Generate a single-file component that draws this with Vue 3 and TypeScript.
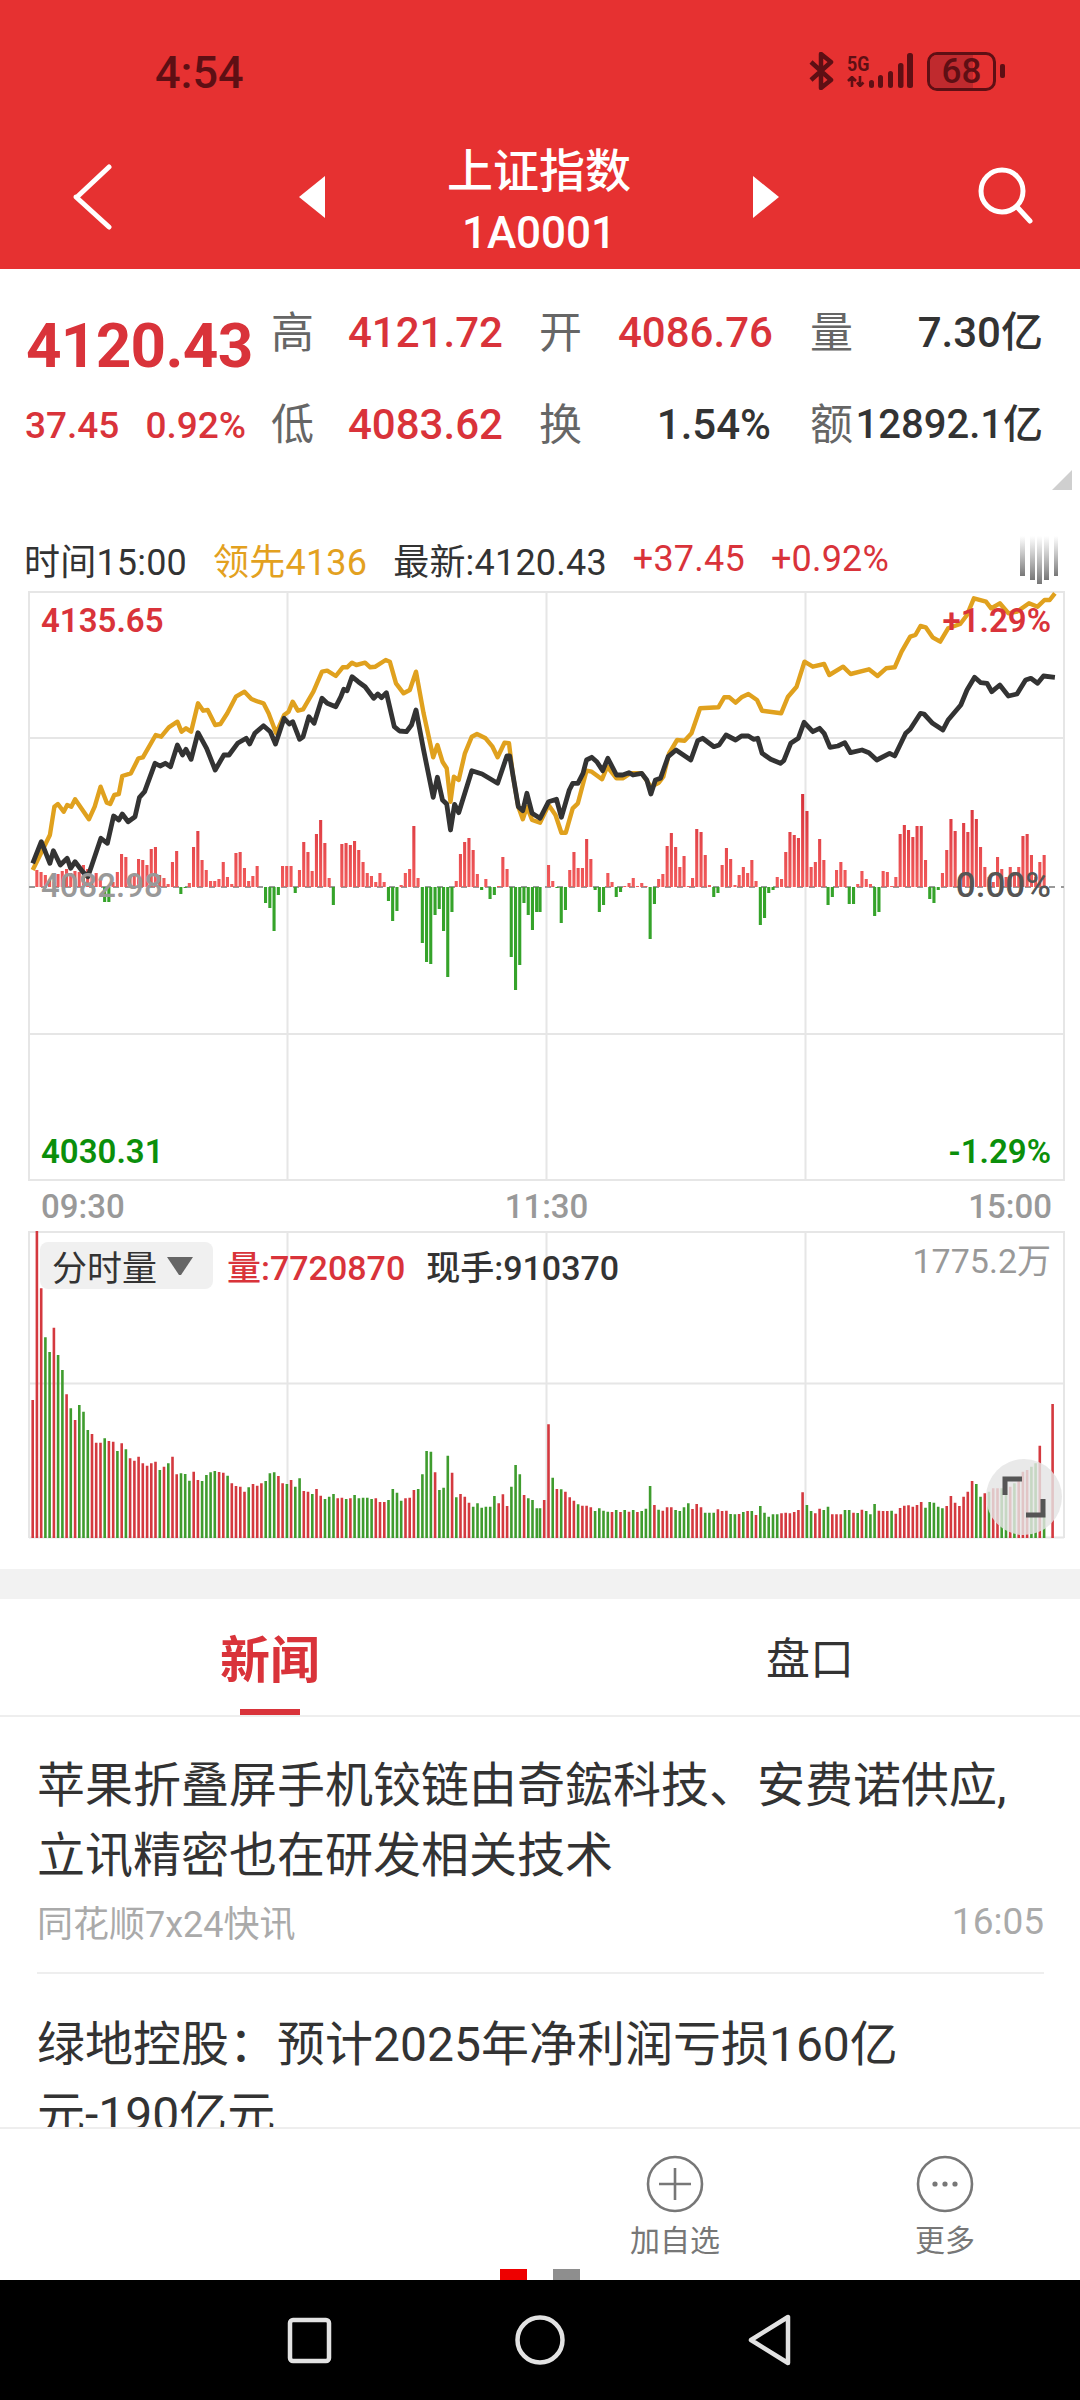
<script setup lang="ts">
const SX = 1568 / 540

const blackL = [95,1030,120,965,145,1030,155,992,175,1035,195,1015,205,1045,218,1025,240,1055,255,1070,265,1040,293,955,312,970,330,888,345,900,355,882,372,905,392,890,405,832,420,815,450,730,465,738,480,730,495,740,515,675,530,705,540,688,555,718,575,638,600,685,625,750,650,705,665,705,690,670,715,655,725,672,740,640,765,617,785,635,800,672,825,595,840,612,850,605,870,658,880,650,897,590,912,610,935,535,950,550,975,560,990,530,998,508,1008,512,1022,470,1040,485,1060,500,1085,535,1097,522,1108,533,1122,518,1145,620,1160,633,1180,635,1195,615,1208,570,1230,690,1258,832,1270,772,1285,840,1297,852,1308,930,1320,853,1332,878,1370,752,1400,762,1445,790,1472,708,1480,708,1505,860,1518,872,1530,820,1545,880,1568,895]
const blackR = [0,895,25,845,48,838,62,892,85,810,95,790,110,790,125,760,135,720,150,712,165,725,182,752,197,715,222,765,240,765,258,758,270,765,295,760,310,780,322,822,335,780,350,775,372,710,395,690,438,720,458,662,472,655,505,680,520,675,540,645,568,660,585,648,605,648,620,658,632,655,645,700,670,718,698,730,708,722,728,670,750,655,767,607,792,635,812,625,825,640,842,682,865,678,885,668,902,698,935,690,955,698,978,720,1015,700,1030,708,1062,640,1075,628,1105,580,1115,582,1140,610,1170,630,1185,600,1222,555,1240,510,1262,472,1280,488,1298,490,1312,515,1335,495,1360,528,1385,522,1410,480,1425,475,1445,490,1462,468,1495,472]
const goldL = [95,1050,145,945,158,860,168,852,185,875,195,855,207,860,218,838,238,868,258,898,275,860,292,800,310,848,320,852,332,825,345,822,355,768,380,760,402,715,415,712,452,645,468,650,490,622,515,605,527,635,540,625,555,635,575,550,590,572,603,570,625,615,640,612,660,580,685,530,710,515,730,537,750,545,765,550,780,580,802,640,825,585,838,575,850,545,865,572,880,568,910,515,935,455,950,452,975,468,995,442,1008,442,1022,428,1035,435,1060,428,1075,442,1090,440,1120,420,1132,425,1150,490,1172,520,1190,510,1208,455,1230,580,1258,712,1270,675,1285,725,1297,745,1308,845,1318,770,1332,780,1350,700,1370,650,1385,642,1410,655,1430,680,1445,712,1465,668,1478,670,1490,770,1505,860,1518,898,1530,860,1545,900,1568,908]
const goldR = [0,905,25,855,45,885,62,938,75,938,95,865,110,850,135,752,150,755,180,778,195,740,222,775,240,775,262,760,295,760,310,782,322,800,345,788,358,770,375,700,398,660,420,662,440,640,465,565,518,562,535,532,550,532,568,548,585,532,605,522,630,540,645,572,700,580,720,530,745,500,768,425,792,440,825,432,840,465,880,440,902,462,955,448,980,468,1005,445,1030,442,1050,395,1075,350,1090,345,1105,318,1120,322,1140,352,1162,365,1185,325,1220,312,1240,285,1260,235,1295,245,1310,265,1335,250,1360,280,1385,275,1420,250,1445,260,1465,240,1480,240,1495,220]

function toPoints(left: number[], right: number[]): string {
  const out: string[] = []
  for (let i = 0; i < left.length; i += 2) out.push(`${(left[i] / SX).toFixed(1)},${(520 + left[i + 1] / 3).toFixed(1)}`)
  for (let i = 2; i < right.length; i += 2) out.push(`${(540 + right[i] / SX).toFixed(1)},${(520 + right[i + 1] / 3).toFixed(1)}`)
  return out.join(' ')
}
const blackLine = toPoints(blackL, blackR)
const goldLine = toPoints(goldL, goldR)

const diffL = [17,15,12,8,5,13,16,18,14,16,15,22,18,10,14,8,-15,-15,5,15,33,30,10,12,28,27,22,38,40,12,9,3,25,36,-7,-1,4,40,56,27,17,6,6,8,25,10,3,34,35,19,6,11,21,0,-16,-21,-44,-8,21,21,21,-6,17,45,35,16,53,67,44,9,-18,0,43,44,42,46,37,25,14,11,5,14,5,-14,-34,-24,2,14,18,61,9,-56,-75,-77,-28,-22,-44,-90,-25,6,33,45,49,37,13,-3,8,-12,-8,1,30,18,-70,-103,-78,-16,-28,-43,-25]
const diffR = [-25,0,22,6,-1,-36,-23,17,35,19,19,48,28,-3,-25,-18,14,5,-10,-5,1,4,9,1,4,1,-52,-17,8,13,41,54,40,20,31,1,9,58,55,32,2,-10,-6,22,39,28,2,12,20,14,27,6,-38,-31,-6,-3,10,8,35,55,52,49,93,76,20,25,48,27,-18,-10,17,25,17,-17,-17,3,16,8,3,-29,-25,16,15,1,10,53,62,57,50,61,61,27,-12,-16,-3,14,37,68,56,2,64,55,77,68,40,20,10,5,30,18,10,20,15,20,51,53,32,10,25,32]

const volL = [660,150,325,-472,-516,443,-525,-570,643,-685,720,-675,-695,-750,762,788,788,-775,783,785,-813,790,-808,835,842,830,850,857,850,845,-870,860,-850,830,883,-880,-882,-902,875,900,-903,-885,-877,-873,876,878,-887,910,918,920,935,-922,912,917,910,-903,-880,-877,888,910,-912,900,-920,-895,933,935,-942,927,947,-957,-950,-942,955,953,-957,955,-945,-955,-953,-953,-957,955,966,966,-960,-927,-938,-962,955,953,930,-927,-883,-813,-815,877,-930,-923,-827,878,-952,942,950,968,-980,-970,-983,-980,-980,-948,970,943,978,-920,-855,-883,945,-955,-960,-985]
const volR = [-985,960,733,-893,927,-928,935,952,962,-973,977,977,982,-993,-985,-992,-995,996,-990,996,-990,995,-990,996,-993,-986,-918,975,-989,992,982,982,-990,-993,-982,-970,987,972,982,-998,-998,-998,988,993,992,-1002,-1003,1002,-996,993,-993,1005,-978,-998,-1010,-1003,-1003,1000,998,1000,996,990,937,-975,-993,1000,986,-990,-980,1003,1003,1003,-990,-990,998,-999,989,-993,-1003,-972,992,993,993,-992,1001,984,977,976,980,975,966,-983,-966,-968,-980,-985,978,948,968,978,950,935,903,-912,-950,940,-935,925,925,-925,-930,920,-910,890,875,870,-860,-850,797,-1000,0,672]

function diffPaths() {
  let red = ''
  let green = ''
  const add = (x: number, h: number) => {
    if (h === 0) return
    const seg = `M${x.toFixed(1)} 887h3.1v${(-h).toFixed(1)}h-3.1Z`
    if (h > 0) red += seg
    else green += seg
  }
  diffL.forEach((h, i) => add(36.8 - 1.5 + (i * 12.3) / SX, h))
  diffR.forEach((h, i) => add(540 - 1.5 + (i * 12.3) / SX, h))
  return { red, green }
}
function volPaths() {
  let red = ''
  let green = ''
  const add = (x: number, v: number) => {
    if (v === 0) return
    const top = 1180 + Math.abs(v) / 3
    const seg = `M${x.toFixed(1)} 1538V${top.toFixed(1)}h2.6V1538Z`
    if (v > 0) red += seg
    else green += seg
  }
  volL.forEach((v, i) => add(32.7 - 1.3 + (i * 12.3) / SX, v))
  volR.forEach((v, i) => add(540 - 1.3 + (i * 12.3) / SX, v))
  return { red, green }
}
const diff = diffPaths()
const vol = volPaths()

const signal = [
  { x: 869, y: 82, h: 8, w: 5 },
  { x: 878, y: 77, h: 13, w: 5 },
  { x: 888, y: 73, h: 17, w: 5 },
  { x: 898, y: 65, h: 25, w: 5.5 },
  { x: 907, y: 55, h: 35, w: 6 }
]
</script>

<template>
  <div class="page">
    <header class="header">
      <div class="status">
        <span class="clock">4:54</span>
        <div class="status-icons">
          <svg class="bt" width="26" height="38" viewBox="0 0 26 38" fill="none" stroke="#5e0f14" stroke-width="4.5" stroke-linejoin="round">
            <path d="M2 10 22 28 12 36V2l10 8L2 28" />
          </svg>
          <div class="net">
            <span class="five-g">5G</span>
            <svg width="19" height="11" viewBox="0 0 19 11" fill="none" stroke="#5e0f14" stroke-width="2.6">
              <path d="M5 11V1.5M1 5l4-4 4 4M13 0v9.500M10 6.500l3 3.500 3.500-3.500" />
            </svg>
          </div>
          <svg class="sig" width="48" height="36" viewBox="866 55 48 36">
            <rect v-for="s in signal" :key="s.x" :x="s.x" :y="s.y" :width="s.w" :height="s.h" rx="2.500" fill="#5e0f14" />
          </svg>
          <div class="battery">
            <div class="battery-fill"></div>
            <span class="battery-num">68</span>
          </div>
          <div class="battery-nub"></div>
        </div>
      </div>
      <nav class="nav">
        <svg class="back" width="40" height="66" viewBox="0 0 40 66" fill="none" stroke="#fff" stroke-width="5" stroke-linecap="round" stroke-linejoin="round">
          <path d="M36 3 4 33l-1 0 33 30" />
        </svg>
        <div class="nav-center">
          <svg width="28" height="42" viewBox="0 0 28 42"><path d="M27 0v42L1 21Z" fill="#fff" /></svg>
          <div class="title">
            <div class="title-name">上证指数</div>
            <div class="title-code">1A0001</div>
          </div>
          <svg width="28" height="42" viewBox="0 0 28 42"><path d="M1 0v42l26-21Z" fill="#fff" /></svg>
        </div>
        <svg class="search" width="56" height="60" viewBox="0 0 56 60" fill="none" stroke="#fff" stroke-width="5" stroke-linecap="round">
          <circle cx="24" cy="24" r="21" />
          <path d="M40 41 52 54" />
        </svg>
      </nav>
    </header>

    <section class="quote">
      <div class="price">4120.43</div>
      <div class="lab">高</div>
      <div class="val red">4121.72</div>
      <div class="lab">开</div>
      <div class="val red">4086.76</div>
      <div class="lab">量</div>
      <div class="val dark end">7.30亿</div>

      <div class="change"><span>37.45</span><span>0.92%</span></div>
      <div class="lab">低</div>
      <div class="val red">4083.62</div>
      <div class="lab">换</div>
      <div class="val dark mid">1.54%</div>
      <div class="lab">额</div>
      <div class="val dark end tight">12892.1亿</div>
    </section>
    <div class="corner">
      <svg width="20" height="20" viewBox="0 0 20 20"><path d="M20 0V20H0Z" fill="#cfcfcf" /></svg>
    </div>

    <div class="info">
      <span>时间15:00</span>
      <span class="gold">领先4136</span>
      <span>最新:4120.43</span>
      <span class="red">+37.45</span>
      <span class="red">+0.92%</span>
      <svg class="handle" width="40" height="52" viewBox="0 0 40 52">
        <defs>
          <linearGradient id="hg" x1="0" y1="0" x2="0" y2="1">
            <stop offset="0" stop-color="#888" stop-opacity="0" />
            <stop offset="1" stop-color="#777" />
          </linearGradient>
        </defs>
        <rect x="1" y="2" width="5" height="40" fill="url(#hg)" />
        <rect x="11" y="2" width="5" height="44" fill="url(#hg)" />
        <rect x="18" y="2" width="5" height="48" fill="url(#hg)" />
        <rect x="25" y="2" width="5" height="44" fill="url(#hg)" />
        <rect x="35" y="2" width="4" height="40" fill="url(#hg)" />
      </svg>
    </div>

    <div class="chart chart-main">
      <svg class="plot" width="1080" height="590" viewBox="0 591 1080 590">
        <defs>
          <linearGradient id="redbar" gradientUnits="userSpaceOnUse" x1="0" y1="800" x2="0" y2="887">
            <stop offset="0" stop-color="#d8343c" />
            <stop offset="1" stop-color="#f25c5c" />
          </linearGradient>
        </defs>
        <g stroke="#e6e6e6" stroke-width="2" fill="none">
          <rect x="29" y="592" width="1035" height="588" />
          <path d="M287.5 592V1180M546.5 592V1180M805.5 592V1180M29 738H1064M29 1034H1064" />
        </g>
        <path d="M29 887H1064" stroke="#999" stroke-width="2" stroke-dasharray="6 6" />
        <path :d="diff.red" fill="url(#redbar)" />
        <path :d="diff.green" fill="#35a32a" />
        <polyline :points="goldLine" fill="none" stroke="#e0a11e" stroke-width="4.4" stroke-linejoin="round" />
        <polyline :points="blackLine" fill="none" stroke="#333" stroke-width="4.8" stroke-linejoin="round" />
      </svg>
      <span class="tag red tl">4135.65</span>
      <span class="tag red tr">+1.29%</span>
      <span class="tag gray-mid ml">4082.98</span>
      <span class="tag dark-mid mr">0.00%</span>
      <span class="tag green bl">4030.31</span>
      <span class="tag green br">-1.29%</span>
    </div>

    <div class="axis">
      <span>09:30</span>
      <span>11:30</span>
      <span>15:00</span>
    </div>

    <div class="chart chart-vol">
      <svg class="plot" width="1080" height="310" viewBox="0 1231 1080 310">
        <g stroke="#e6e6e6" stroke-width="2" fill="none">
          <path d="M29 1538V1232H1064V1538M287.5 1232V1538M546.5 1232V1538M805.5 1232V1538M29 1383.5H1064M29 1537.5H1064" />
        </g>
        <path :d="vol.red" fill="#d4393f" />
        <path :d="vol.green" fill="#3f9c2e" />
      </svg>
      <div class="vol-head">
        <div class="chip">
          <span>分时量</span>
          <svg width="28" height="20" viewBox="0 0 28 20"><path d="M1 1h26L15 19h-2Z" fill="#666" /></svg>
        </div>
        <span class="vol-text red">量:7720870</span>
        <span class="vol-text dark">现手:910370</span>
      </div>
      <span class="vol-max">1775.2万</span>
      <div class="expand">
        <svg width="76" height="76" viewBox="0 0 76 76" fill="none" stroke="#555" stroke-width="5">
          <path d="M19 36V20H36M57 40V56H40" />
        </svg>
      </div>
    </div>

    <div class="gap"></div>

    <div class="tabs">
      <div class="tab active">新闻<i></i></div>
      <div class="tab">盘口</div>
    </div>

    <div class="news">
      <article class="item">
        <h3>苹果折叠屏手机铰链由奇鋐科技、安费诺供应,立讯精密也在研发相关技术</h3>
        <div class="meta"><span>同花顺7x24快讯</span><span class="num">16:05</span></div>
      </article>
      <article class="item">
        <h3>绿地控股：预计2025年净利润亏损160亿<br />元-190亿元</h3>
      </article>
    </div>

    <footer class="actions">
      <div class="action-row">
        <div class="action">
          <svg width="58" height="58" viewBox="0 0 58 58" fill="none" stroke="#777" stroke-width="2.6">
            <circle cx="29" cy="29" r="27" />
            <path d="M13 29H45M29 13V45" />
          </svg>
          <span>加自选</span>
        </div>
        <div class="action">
          <svg width="58" height="58" viewBox="0 0 58 58" fill="none" stroke="#777" stroke-width="2.6">
            <circle cx="29" cy="29" r="27" />
            <g fill="#777" stroke="none">
              <circle cx="19" cy="29" r="2.6" />
              <circle cx="29" cy="29" r="2.6" />
              <circle cx="39" cy="29" r="2.6" />
            </g>
          </svg>
          <span>更多</span>
        </div>
      </div>
      <div class="dots"><i class="on"></i><i></i></div>
    </footer>

    <div class="sysnav">
      <svg width="1080" height="120" viewBox="0 0 1080 120" fill="none" stroke="#e2e2e2" stroke-width="4.5" stroke-linejoin="round">
        <rect x="290" y="40" width="39" height="41" rx="3" />
        <circle cx="540" cy="60" r="22.5" />
        <path d="M788 37V83L751 60Z" />
      </svg>
    </div>
  </div>
</template>

<style scoped>
.page {
  width: 1080px;
  height: 2400px;
  display: flex;
  flex-direction: column;
  overflow: hidden;
  background: #fff;
  color: #333;
  font-family: Roboto, "Noto Sans CJK SC", sans-serif;
}
.red { color: #d9333a; }
.green { color: #0b8f0b; }
.dark { color: #333; }
.gold { color: #e3a11f; }

.header {
  height: 269px;
  flex: none;
  background: #e63131;
  display: flex;
  flex-direction: column;
}
.status {
  height: 125px;
  flex: none;
  padding: 49px 75px 0 155px;
  display: flex;
  justify-content: space-between;
  align-items: flex-start;
  box-sizing: border-box;
}
.clock {
  font-size: 45px;
  line-height: 48px;
  font-weight: 500;
  color: #5e0f14;
}
.status-icons {
  display: flex;
  align-items: center;
  height: 44px;
}
.bt { margin-right: 12px; }
.net {
  display: flex;
  flex-direction: column;
  width: 28px;
  gap: 3px;
  color: #5e0f14;
  font-weight: 700;
}
.five-g {
  font-size: 21px;
  line-height: 18px;
  transform: scaleX(.85);
  transform-origin: left;
}
.sig { margin-right: 13px; margin-left: -9px; }
.battery {
  position: relative;
  width: 69px;
  height: 39px;
  box-sizing: border-box;
  border: 3px solid #5e0f14;
  border-radius: 10px;
  overflow: hidden;
  display: flex;
  align-items: center;
  justify-content: center;
}
.battery-fill {
  position: absolute;
  left: 0;
  top: 0;
  bottom: 0;
  width: 68%;
  background: #c02a2e;
}
.battery-num {
  position: relative;
  font-size: 35px;
  font-weight: 500;
  color: #5e0f14;
}
.battery-nub {
  width: 5px;
  height: 14px;
  margin-left: 4px;
  border-radius: 2px;
  background: #5e0f14;
}
.nav {
  height: 144px;
  flex: none;
  display: grid;
  grid-template-columns: 225px 482px 1fr;
  align-items: center;
  padding: 0 46px 0 73px;
}
.back { justify-self: start; }
.search { justify-self: end; }
.nav-center {
  display: flex;
  align-items: center;
  justify-content: space-between;
}
.title {
  color: #fff;
  text-align: center;
  padding-top: 10px;
}
.title-name { font-size: 46px; line-height: 62px; font-weight: 500; }
.title-code { font-size: 44px; line-height: 62px; font-weight: 500; }

.quote {
  flex: none;
  display: grid;
  grid-template-columns: 246px 76px 192px 78px 193px 41px 191px;
  grid-template-rows: 92px 92px;
  align-items: center;
  padding: 18px 0 0 26px;
  box-sizing: border-box;
  width: 1080px;
  height: 201px;
}
.price {
  font-size: 62px;
  font-weight: 700;
  color: #d9333a;
  letter-spacing: -.7px;
  line-height: 1;
  padding-top: 26px;
}
.change {
  display: flex;
  gap: 26px;
  font-size: 37px;
  font-weight: 500;
  color: #d9333a;
  margin-left: -1px;
}
.lab { font-size: 43px; color: #666; line-height: 1; margin-left: -1px; }
.val { font-size: 42px; font-weight: 500; line-height: 1; white-space: nowrap; }
.end { text-align: right; margin-left: -40px; }
.tight { font-size: 40px; }
.mid { text-align: right; padding-right: 40px; }
.corner {
  flex: none;
  height: 20px;
  display: flex;
  justify-content: flex-end;
  padding-right: 8px;
}

.info {
  flex: none;
  height: 102px;
  box-sizing: border-box;
  padding: 36px 0 0 24px;
  display: flex;
  align-items: center;
  gap: 26px;
  font-size: 36px;
  letter-spacing: .2px;
  position: relative;
}
.handle {
  position: absolute;
  left: 1019px;
  top: 44px;
}

.chart { position: relative; flex: none; }
.chart-main { height: 590px; margin-top: -1px; }
.plot { display: block; }
.tag {
  position: absolute;
  font-size: 33px;
  line-height: 40px;
  font-weight: 600;
}
.tl { left: 41px; top: 10px; }
.tr { right: 29px; top: 10px; }
.ml { left: 41px; top: 275px; }
.mr { right: 29px; top: 275px; font-size: 35px; }
.bl { left: 41px; top: 541px; }
.br { right: 29px; top: 541px; }
.gray-mid { color: #999; font-weight: 500; }
.dark-mid { color: #555; font-weight: 500; }

.axis {
  flex: none;
  height: 51px;
  display: flex;
  justify-content: space-between;
  align-items: center;
  padding: 2px 28px 0 41px;
  box-sizing: border-box;
  font-size: 33px;
  font-weight: 500;
  color: #999;
  margin-top: -1px;
}

.chart-vol { height: 310px; }
.vol-head {
  position: absolute;
  left: 40px;
  top: 11px;
  display: flex;
  align-items: center;
  height: 47px;
  gap: 24px;
}
.chip {
  width: 173px;
  height: 47px;
  box-sizing: border-box;
  padding-left: 12px;
  background: #f0f0f0;
  border-radius: 8px;
  display: flex;
  align-items: center;
  gap: 9px;
  font-size: 35px;
  margin-right: -10px;
}
.vol-text { font-size: 34px; font-weight: 500; }
.vol-text.dark { margin-left: -3px; }
.vol-max {
  position: absolute;
  right: 29px;
  top: 9px;
  font-size: 34px;
  line-height: 42px;
  color: #999;
}
.expand {
  position: absolute;
  left: 986px;
  top: 228px;
  width: 76px;
  height: 76px;
  border-radius: 50%;
  background: rgba(228, 228, 228, .82);
}

.gap {
  flex: none;
  height: 30px;
  margin-top: 28px;
  background: #f2f2f2;
}

.tabs {
  flex: none;
  height: 118px;
  display: grid;
  grid-template-columns: 540px 540px;
  border-bottom: 2px solid #eee;
  box-sizing: border-box;
}
.tab {
  position: relative;
  display: flex;
  align-items: center;
  justify-content: center;
  font-size: 44px;
  color: #333;
  padding-bottom: 3px;
  box-sizing: border-box;
}
.tab:first-child { justify-content: flex-start; padding-left: 220px; }
.tab.active { font-size: 50px; font-weight: 700; color: #d9333a; }
.tab i {
  position: absolute;
  left: 240px;
  bottom: 0;
  width: 60px;
  height: 6px;
  background: #d9333a;
}

.news {
  flex: 1;
  min-height: 0;
  overflow: hidden;
  padding: 0 36px 0 37px;
}
.item { border-bottom: 2px solid #eee; padding: 34px 0 0; }
.item + .item { padding-top: 36px; }
.item h3 {
  margin: 0;
  font-size: 48px;
  line-height: 70px;
  font-weight: 400;
  color: #333;
}
.meta {
  display: flex;
  justify-content: space-between;
  align-items: center;
  height: 60px;
  margin-bottom: 21px;
  font-size: 36px;
  color: #aaa;
}
.num { font-size: 37px; }

.actions {
  flex: none;
  height: 153px;
  box-sizing: border-box;
  border-top: 2px solid #eee;
  background: #fff;
  display: flex;
  flex-direction: column;
}
.action-row {
  flex: 1;
  display: flex;
  justify-content: flex-end;
}
.action {
  width: 270px;
  display: flex;
  flex-direction: column;
  align-items: center;
  padding-top: 26px;
  gap: 6px;
  font-size: 30px;
  color: #777;
  box-sizing: border-box;
}
.action span { line-height: 44px; }
.dots {
  height: 11px;
  flex: none;
  display: flex;
  justify-content: center;
  gap: 26px;
}
.dots i {
  width: 27px;
  height: 11px;
  background: #8e8e8e;
}
.dots i.on { background: #ee0000; }

.sysnav {
  flex: none;
  height: 120px;
  background: #000;
}
.sysnav svg { display: block; }
</style>

<style>
html, body { margin: 0; background: #fff; }
</style>
